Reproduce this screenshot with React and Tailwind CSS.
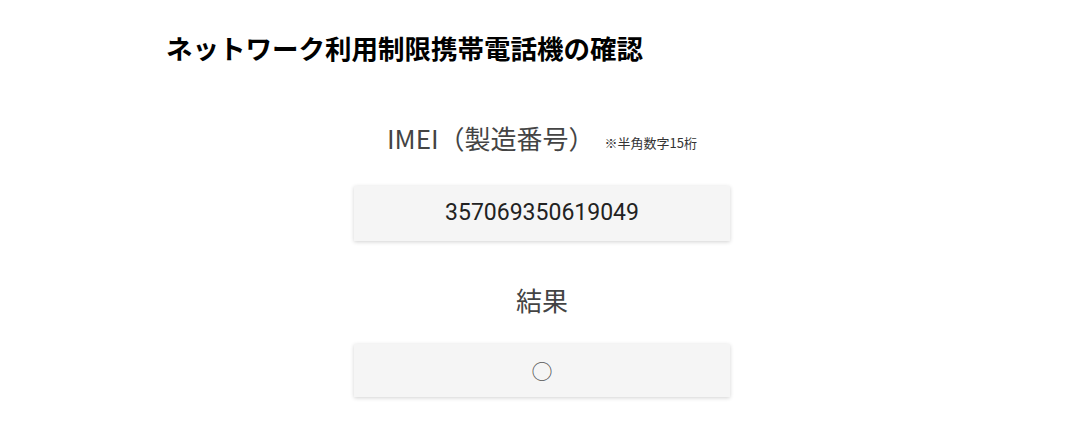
export default function App() {
  return (
    <div className="w-[1080px] h-[424px] bg-white text-[#333] [font-family:'Noto_Sans_CJK_JP','Noto_Sans',sans-serif]">
      <h1 className="pl-[166px] pt-[28px] text-[26.5px] leading-[40px] font-bold text-black">
        ネットワーク利用制限携帯電話機の確認
      </h1>
      <div className="flex flex-col items-center pl-[4px]">
        <div className="mt-[50px] flex items-end gap-[10px] h-[40px]">
          <span className="text-[26px] leading-[40px] font-normal text-[#444]">IMEI（製造番号）</span>
          <span className="text-[13px] leading-[30px] text-[#333]">※半角数字15桁</span>
        </div>
        <div className="mt-[28px] w-[376px] h-[55px] bg-[#f5f5f5] flex items-center justify-center shadow-[0_1px_4px_rgba(0,0,0,0.18)] text-[23px] text-[#222] [font-family:Roboto,'Noto_Sans',sans-serif]">
          357069350619049
        </div>
        <div className="mt-[39px] text-[26px] leading-[40px] font-normal text-[#444]">結果</div>
        <div className="mt-[24px] w-[376px] h-[53px] bg-[#f5f5f5] flex items-center justify-center shadow-[0_1px_4px_rgba(0,0,0,0.18)] text-[21px] text-[#555]">
          ○
        </div>
      </div>
    </div>
  );
}
